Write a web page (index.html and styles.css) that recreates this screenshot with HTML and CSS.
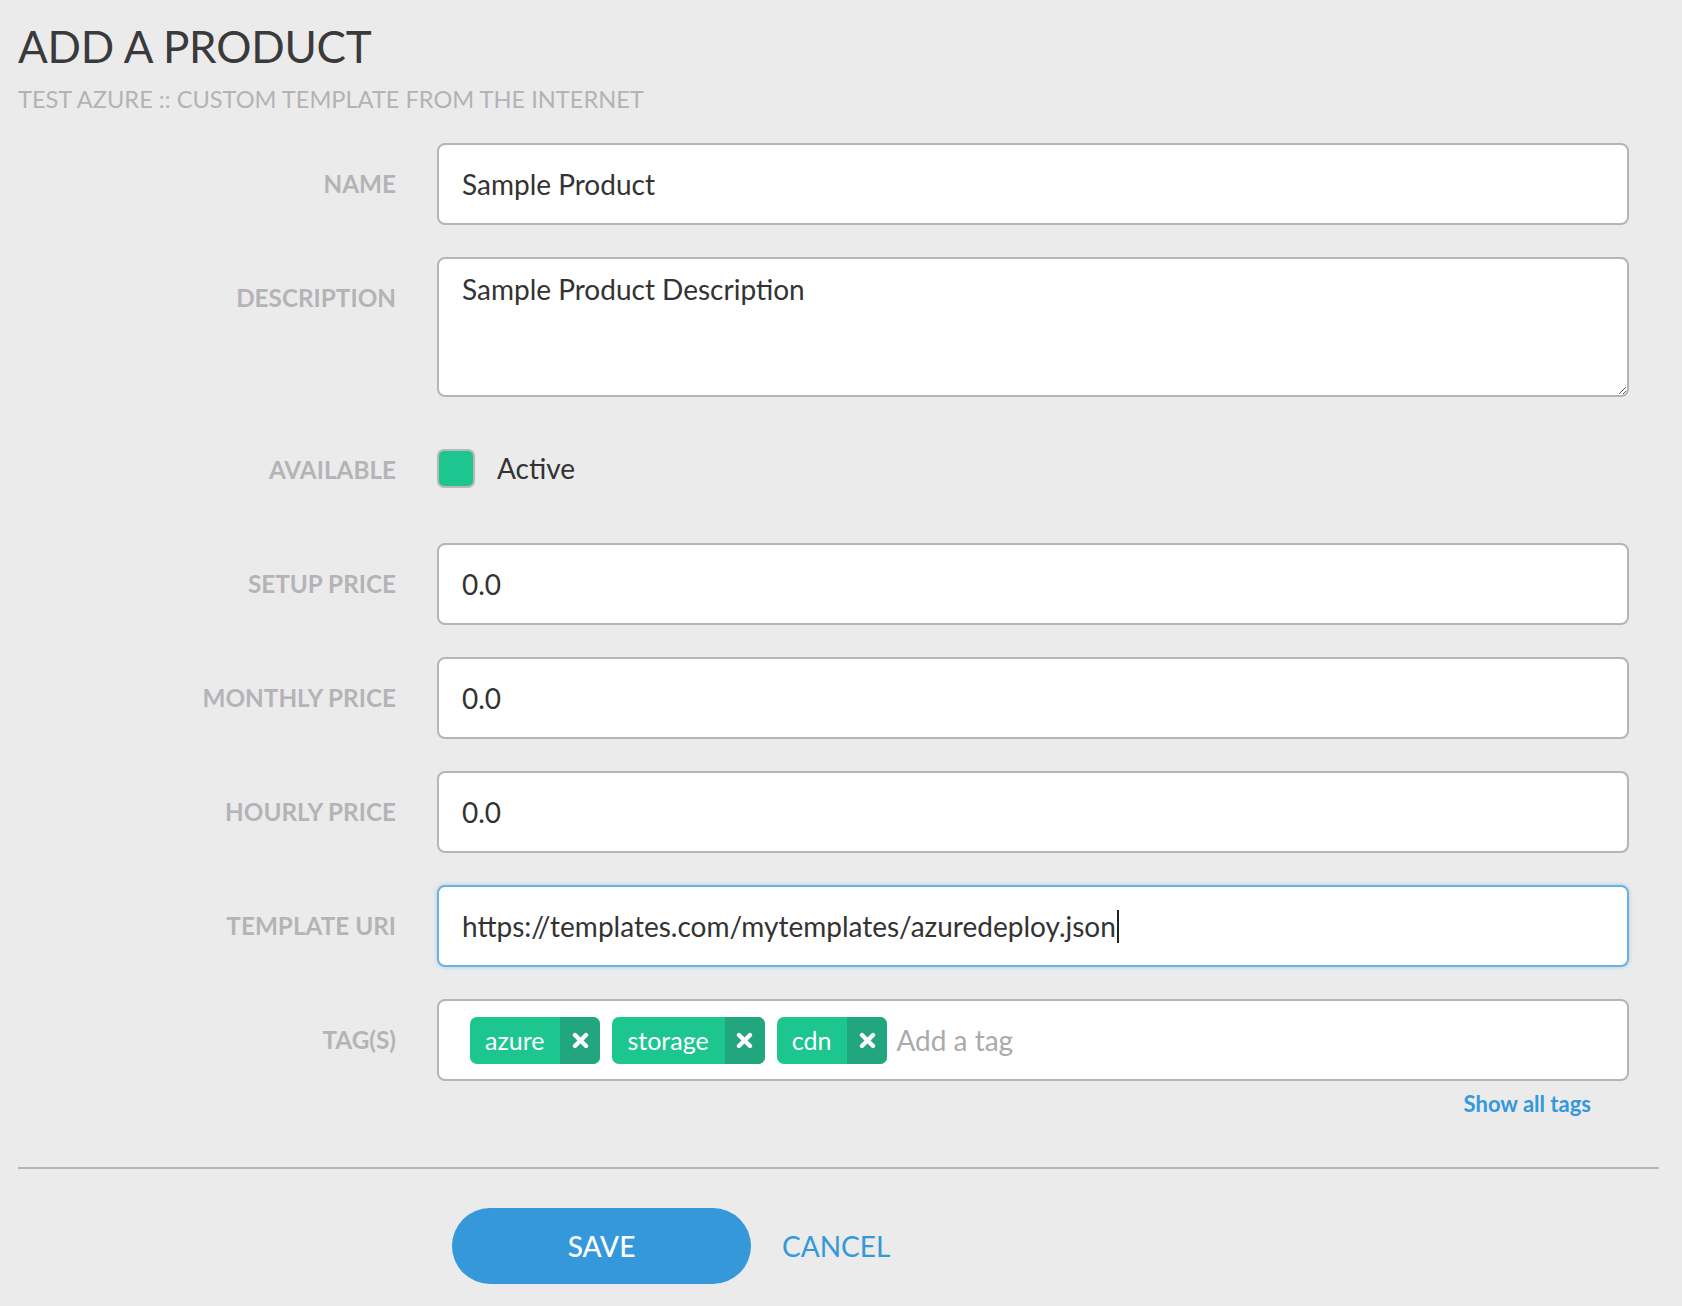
FILE: index.html
```html
<!DOCTYPE html>
<html lang="en">
<head>
<meta charset="utf-8">
<title>Add a Product</title>
<link rel="stylesheet" href="styles.css">
</head>
<body>
<div class="page">
  <h1 class="title">ADD A PRODUCT</h1>
  <div class="subtitle">TEST AZURE :: CUSTOM TEMPLATE FROM THE INTERNET</div>

  <form class="form">
    <label class="label">NAME</label>
    <input class="input" type="text" value="Sample Product">

    <label class="label">DESCRIPTION</label>
    <textarea class="textarea">Sample Product Description</textarea>

    <label class="label">AVAILABLE</label>
    <div class="check-row">
      <span class="checkbox"></span>
      <span class="check-text">Active</span>
    </div>

    <label class="label">SETUP PRICE</label>
    <input class="input" type="text" value="0.0">

    <label class="label">MONTHLY PRICE</label>
    <input class="input" type="text" value="0.0">

    <label class="label">HOURLY PRICE</label>
    <input class="input" type="text" value="0.0">

    <label class="label">TEMPLATE URI</label>
    <div class="input input-focus"><span>https://templates.com/mytemplates/azuredeploy.json</span><span class="caret"></span></div>

    <label class="label">TAG(S)</label>
    <div class="tagbox">
      <span class="tag"><span class="tag-text">azure</span><span class="tag-x"><svg class="x-icon" viewBox="0 0 16 16"><path d="M2.8 2.8 L13.2 13.2 M13.2 2.8 L2.8 13.2" stroke="#fff" stroke-width="4" stroke-linecap="round"/></svg></span></span>
      <span class="tag"><span class="tag-text">storage</span><span class="tag-x"><svg class="x-icon" viewBox="0 0 16 16"><path d="M2.8 2.8 L13.2 13.2 M13.2 2.8 L2.8 13.2" stroke="#fff" stroke-width="4" stroke-linecap="round"/></svg></span></span>
      <span class="tag"><span class="tag-text">cdn</span><span class="tag-x"><svg class="x-icon" viewBox="0 0 16 16"><path d="M2.8 2.8 L13.2 13.2 M13.2 2.8 L2.8 13.2" stroke="#fff" stroke-width="4" stroke-linecap="round"/></svg></span></span>
      <span class="tag-placeholder">Add a tag</span>
    </div>

    <span></span>
    <div class="show-tags"><a href="#" class="show-link">Show all tags</a></div>
  </form>

  <hr class="divider">

  <div class="actions">
    <button class="btn-save" type="button">SAVE</button>
    <a href="#" class="btn-cancel">CANCEL</a>
  </div>
</div>
</body>
</html>
```

FILE: styles.css
```css
* { box-sizing: border-box; }

html, body {
  margin: 0;
  padding: 0;
  background: #ebebeb;
  font-family: Lato, "Open Sans", sans-serif;
}

.page {
  padding: 20px 23px 0 18px;
}

.title {
  margin: 0;
  font-size: 44px;
  font-weight: 400;
  line-height: 52px;
  color: #3a3a3c;
  letter-spacing: -0.2px;
}

.subtitle {
  margin-top: 14px;
  font-size: 23.6px;
  line-height: 26px;
  color: #b3b3b6;
}

.form {
  margin-top: 31px;
  display: grid;
  grid-template-columns: 378px 1192px;
  column-gap: 41px;
  row-gap: 32px;
}

.label {
  height: 82px;
  line-height: 82px;
  text-align: right;
  font-size: 24.3px;
  font-weight: 700;
  color: #b4b4b7;
  white-space: nowrap;
}

.input,
.textarea,
.tagbox {
  display: block;
  width: 100%;
  border: 2px solid #b5b5b8;
  border-radius: 8px;
  background: #fff;
  font-family: Lato, "Open Sans", sans-serif;
  font-size: 28px;
  color: #333;
  outline: none;
}

.input {
  height: 82px;
  padding: 0 23px;
}

div.input {
  display: flex;
  align-items: center;
}

.input-focus {
  border-color: #6cb1e6;
  box-shadow: 0 0 4px rgba(52, 152, 219, 0.35);
}

.caret {
  display: inline-block;
  width: 2px;
  height: 33px;
  background: #222;
  margin-left: 1px;
}

.textarea {
  height: 140px;
  padding: 13px 23px;
  line-height: 34px;
  resize: vertical;
}

.check-row {
  height: 82px;
  display: flex;
  align-items: center;
}

.checkbox {
  width: 38px;
  height: 39px;
  margin-top: -4px;
  border-radius: 7px;
  background: #1dc68f;
  border: 2px solid #b9b9b9;
}

.check-text {
  margin-left: 22px;
  margin-top: -4px;
  font-size: 28px;
  color: #333;
}

.tagbox {
  height: 82px;
  padding: 0 20px 0 31px;
  display: flex;
  align-items: center;
  gap: 12px;
}

.tag {
  display: inline-flex;
  height: 47px;
  border-radius: 7px;
  overflow: hidden;
  background: #1dc68f;
  color: #fff;
}

.tag-text {
  display: flex;
  align-items: center;
  padding: 0 16px 0 15px;
  font-size: 25px;
}

.tag-x {
  width: 40px;
  flex: 0 0 40px;
  display: flex;
  align-items: center;
  justify-content: center;
  background: #22a67e;
}

.x-icon {
  width: 17px;
  height: 17px;
  flex: 0 0 17px;
  display: block;
}

.tag-placeholder {
  margin-left: -3px;
  font-size: 28px;
  color: #aaaaad;
}

.show-tags {
  margin-top: -23px;
  text-align: right;
  padding-right: 38px;
}

.show-link {
  font-size: 22px;
  font-weight: 700;
  color: #3498db;
  text-decoration: none;
}

.divider {
  margin: 50px 0 0 0;
  border: 0;
  height: 2px;
  background: #b4b4b8;
}

.actions {
  margin-top: 39px;
  padding-left: 434px;
  display: flex;
  align-items: center;
  gap: 31px;
}

.btn-save {
  width: 299px;
  height: 76px;
  border: 0;
  border-radius: 38px;
  background: #3498db;
  color: #fff;
  font-family: Lato, "Open Sans", sans-serif;
  font-size: 28px;
  font-weight: 500;
  cursor: pointer;
}

.btn-cancel {
  font-size: 28px;
  color: #3498db;
  text-decoration: none;
}
```
